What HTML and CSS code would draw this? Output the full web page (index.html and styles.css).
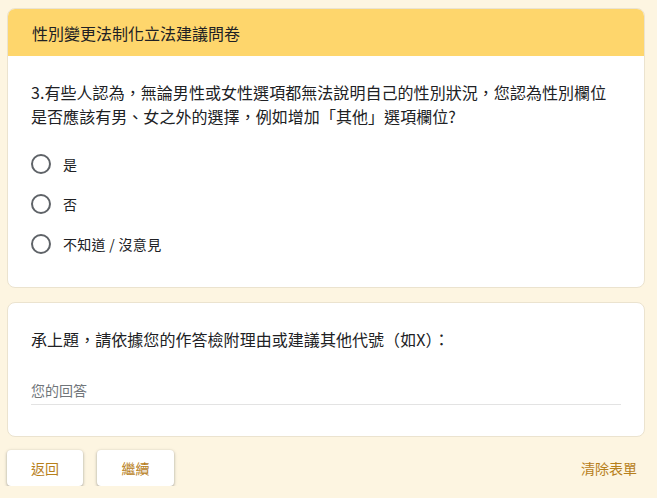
FILE: index.html
```html
<!DOCTYPE html>
<html lang="zh-Hant">
<head>
<meta charset="utf-8">
<title>性別變更法制化立法建議問卷</title>
<link rel="stylesheet" href="styles.css">
</head>
<body>
<div class="page">
  <section class="card">
    <header class="card-head">性別變更法制化立法建議問卷</header>
    <div class="card-body">
      <p class="question">3.有些人認為，無論男性或女性選項都無法說明自己的性別狀況，您認為性別欄位是否應該有男、女之外的選擇，例如增加「其他」選項欄位?</p>
      <div class="options">
        <label class="option"><span class="radio"></span><span class="opt-text">是</span></label>
        <label class="option"><span class="radio"></span><span class="opt-text">否</span></label>
        <label class="option"><span class="radio"></span><span class="opt-text">不知道&nbsp;/&nbsp;沒意見</span></label>
      </div>
    </div>
  </section>
  <section class="card">
    <div class="card-body card-body-2">
      <p class="question">承上題，請依據您的作答檢附理由或建議其他代號（如X）：</p>
      <div class="answer">您的回答</div>
    </div>
  </section>
  <div class="actions">
    <div class="btns">
      <button class="btn">返回</button>
      <button class="btn btn-wide">繼續</button>
    </div>
    <a class="clear">清除表單</a>
  </div>
</div>
</body>
</html>
```

FILE: styles.css
```css
* { box-sizing: border-box; }
html, body {
  margin: 0;
  padding: 0;
  background: #fdf5e1;
  font-family: "Noto Sans CJK TC", "Noto Sans", "Liberation Sans", sans-serif;
  color: #202124;
}
.page {
  width: 638px;
  margin: 8px 0 0 7px;
}
.card {
  background: #fff;
  border: 1px solid #ebe3cf;
  border-radius: 8px;
  overflow: hidden;
  margin-bottom: 14px;
}
.card + .card { margin-bottom: 13px; }
.card-head {
  background: #fed66c;
  height: 47px;
  padding: 0 24px;
  display: flex;
  align-items: center;
  font-size: 16px;
  line-height: 24px;
}
.card-body {
  padding: 24px 23px 23px;
}
.card-body-2 {
  padding: 24px 23px 31px;
}
.question {
  margin: 0;
  font-size: 16px;
  line-height: 24px;
  letter-spacing: 0.05px;
}
.options {
  margin-top: 16px;
  display: flex;
  flex-direction: column;
}
.option {
  height: 40px;
  display: flex;
  align-items: center;
  gap: 12px;
}
.radio {
  width: 20px;
  height: 20px;
  border: 2px solid #5f6368;
  border-radius: 50%;
  flex: none;
}
.opt-text {
  font-size: 14px;
  line-height: 20px;
  letter-spacing: 0.3px;
}
.answer {
  margin-top: 27px;
  height: 27px;
  padding-top: 2px;
  border-bottom: 1px solid #e3e3e3;
  font-size: 14px;
  line-height: 20px;
  color: #70757a;
}
.actions {
  display: flex;
  justify-content: space-between;
  align-items: center;
  padding-right: 8px;
}
.btns {
  display: flex;
  gap: 14px;
}
.btn {
  height: 36px;
  width: 76px;
  border: none;
  border-radius: 4px;
  background: #fff;
  box-shadow: 0 1px 2px rgba(60, 64, 67, 0.3), 0 1px 3px 1px rgba(60, 64, 67, 0.15);
  font-family: inherit;
  font-size: 14px;
  color: #b7801b;
  padding: 0;
}
.btn-wide { width: 77px; }
.clear {
  font-size: 14px;
  color: #b7801b;
}
```
